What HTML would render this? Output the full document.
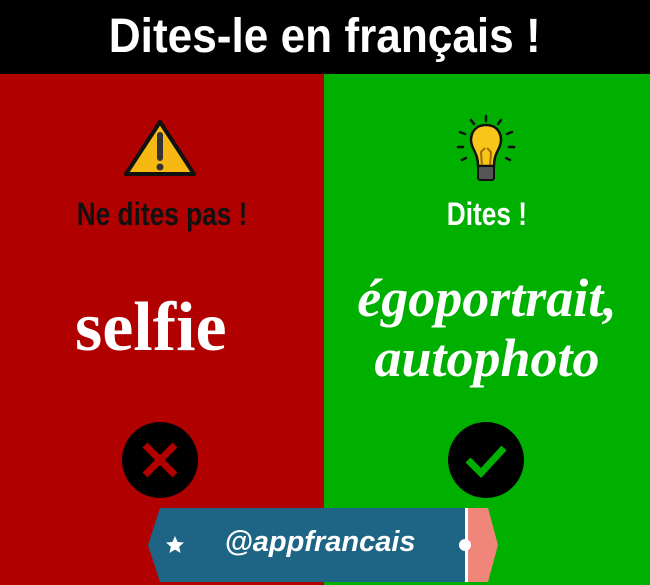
<!DOCTYPE html>
<html><head><meta charset="utf-8"><style>
*{margin:0;padding:0}
body{width:650px;height:585px;position:relative;overflow:hidden;font-family:"Liberation Sans",sans-serif;background:#b10000}
.hdr{position:absolute;left:0;top:0;width:650px;height:74px;background:#000;color:#fff;font-weight:bold;font-size:48px;text-align:center;line-height:74px}
.hdr span{display:inline-block;transform:scaleX(0.92)}
.red{position:absolute;left:0;top:74px;width:324px;height:511px;background:#b10000}
.green{position:absolute;left:324px;top:74px;width:326px;height:511px;background:#00b000}
.t{position:absolute;font-weight:bold;text-align:center}
.t span{display:inline-block}
</style></head><body>
<div class="red"></div><div class="green"></div>
<div class="hdr"><span>Dites-le en français !</span></div>
<svg style="position:absolute;left:120px;top:118px" width="80" height="62"><path d="M40 4 L74 56 L6 56 Z" fill="#f7b814" stroke="#111" stroke-width="4" stroke-linejoin="round"/><path d="M40 17 L40 40" stroke="#333" stroke-width="6" stroke-linecap="round"/><circle cx="40" cy="49" r="3.5" fill="#333"/></svg>
<svg style="position:absolute;left:448px;top:112px" width="76" height="80"><g stroke="#111" stroke-width="2.5" stroke-linecap="round"><path d="M23 8 l3 4 M38 4 v5 M53 8 l-3 4 M12 20 l5 2 M64 20 l-5 2 M10 35 h5 M66 35 h-5 M14 48 l4 -2 M62 48 l-4 -2"/></g><path d="M38 13 C25 13 20 25 25 36 C28 42 30 46 30 54 L46 54 C46 46 48 42 51 36 C56 25 51 13 38 13 Z" fill="#f7c61a" stroke="#111" stroke-width="2.5"/><path d="M34 54 L33 40 L37 36 M42 54 L43 40 L39 36" stroke="#a56a00" stroke-width="2" fill="none"/><rect x="30" y="54" width="16" height="14" rx="2" fill="#555" stroke="#111" stroke-width="2"/></svg>
<div class="t" style="left:0;width:324px;top:196px;font-size:32px;color:#111"><span style="transform:scaleX(0.82)"><b>Ne dites pas !</b></span></div>
<div class="t" style="left:324px;width:326px;top:196px;font-size:32px;color:#fff"><span style="transform:scaleX(0.82)">Dites !</span></div>
<div class="t" style="left:75px;top:290px;font-size:70px;color:#fff;font-family:'Liberation Serif',serif;line-height:76px">selfie</div>
<div class="t" style="left:324px;width:326px;top:268px;font-size:54px;color:#fff;font-family:'Liberation Serif',serif;font-style:italic;line-height:60px">égoportrait,<br>autophoto</div>
<svg style="position:absolute;left:120px;top:420px" width="80" height="80"><ellipse cx="40" cy="40" rx="38" ry="38" fill="#000"/><path d="M25 25 L55 55 M55 25 L25 55" stroke="#b10000" stroke-width="7"/></svg>
<svg style="position:absolute;left:446px;top:420px" width="80" height="80"><ellipse cx="40" cy="40" rx="38" ry="38" fill="#000"/><path d="M22 40 L35 53 L58 28" stroke="#00b000" stroke-width="7" fill="none"/></svg>
<svg style="position:absolute;left:0;top:0" width="650" height="585"><path d="M160 508 L465 508 L465 582 L160 582 L148 545 Z" fill="#1e6484"/><path d="M465 508 L488 508 L498 545 L488 582 L465 582 Z" fill="#f0857a"/><rect x="465" y="508" width="3" height="74" fill="#fff"/><circle cx="465" cy="545" r="6" fill="#fff"/><path d="M175 536 l2.6 6 6.4 .5 -4.9 4.2 1.5 6.3 -5.6 -3.4 -5.6 3.4 1.5 -6.3 -4.9 -4.2 6.4 -.5z" fill="#fff"/></svg>
<div class="t" style="left:200px;width:240px;top:526px;font-size:29px;color:#fff;font-style:italic">@appfrancais</div>
</body></html>
